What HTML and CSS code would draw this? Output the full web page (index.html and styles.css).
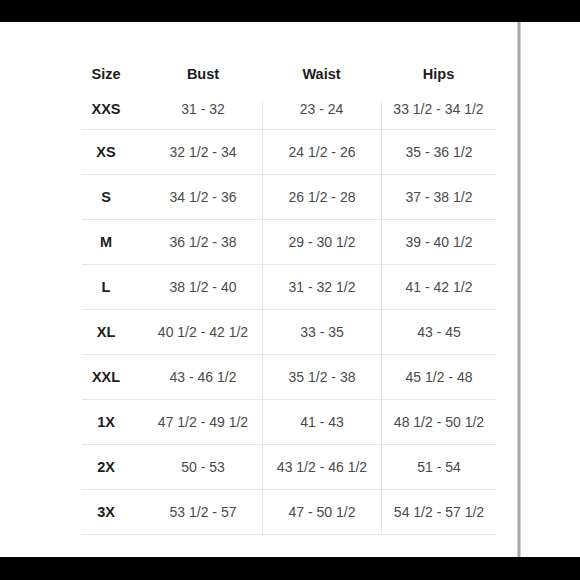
FILE: index.html
```
<!DOCTYPE html>
<html>
<head>
<meta charset="utf-8">
<link rel="stylesheet" href="styles.css">
</head>
<body>
<div class="bar-top"></div>
<div class="main">
  <div class="content">
    <div class="chart">
      <div class="row head">
        <div class="c c1">Size</div><div class="c">Bust</div><div class="c">Waist</div><div class="c">Hips</div>
      </div>
      <div class="row data first">
        <div class="c c1">XXS</div><div class="c">31 - 32</div><div class="c div">23 - 24</div><div class="c div">33 1/2 - 34 1/2</div>
      </div>
      <div class="row data">
        <div class="c c1">XS</div><div class="c">32 1/2 - 34</div><div class="c div">24 1/2 - 26</div><div class="c div">35 - 36 1/2</div>
      </div>
      <div class="row data">
        <div class="c c1">S</div><div class="c">34 1/2 - 36</div><div class="c div">26 1/2 - 28</div><div class="c div">37 - 38 1/2</div>
      </div>
      <div class="row data">
        <div class="c c1">M</div><div class="c">36 1/2 - 38</div><div class="c div">29 - 30 1/2</div><div class="c div">39 - 40 1/2</div>
      </div>
      <div class="row data">
        <div class="c c1">L</div><div class="c">38 1/2 - 40</div><div class="c div">31 - 32 1/2</div><div class="c div">41 - 42 1/2</div>
      </div>
      <div class="row data">
        <div class="c c1">XL</div><div class="c">40 1/2 - 42 1/2</div><div class="c div">33 - 35</div><div class="c div">43 - 45</div>
      </div>
      <div class="row data">
        <div class="c c1">XXL</div><div class="c">43 - 46 1/2</div><div class="c div">35 1/2 - 38</div><div class="c div">45 1/2 - 48</div>
      </div>
      <div class="row data">
        <div class="c c1">1X</div><div class="c">47 1/2 - 49 1/2</div><div class="c div">41 - 43</div><div class="c div">48 1/2 - 50 1/2</div>
      </div>
      <div class="row data">
        <div class="c c1">2X</div><div class="c">50 - 53</div><div class="c div">43 1/2 - 46 1/2</div><div class="c div">51 - 54</div>
      </div>
      <div class="row data">
        <div class="c c1">3X</div><div class="c">53 1/2 - 57</div><div class="c div">47 - 50 1/2</div><div class="c div">54 1/2 - 57 1/2</div>
      </div>
    </div>
  </div>
  <div class="scroll"></div>
  <div class="side"></div>
</div>
<div class="bar-bottom"></div>
</body>
</html>
```
FILE: styles.css
```
html, body {
  margin: 0;
  padding: 0;
  background: #ffffff;
}
body {
  width: 580px;
  height: 580px;
  display: flex;
  flex-direction: column;
  font-family: "Liberation Sans", Arial, sans-serif;
}
.bar-top {
  height: 22px;
  background: #000;
  flex: none;
}
.bar-bottom {
  height: 23px;
  background: #000;
  flex: none;
}
.main {
  flex: 1;
  display: flex;
}
.content {
  width: 517px;
  flex: none;
  padding-top: 37px;
  box-sizing: border-box;
}
.scroll {
  width: 2px;
  flex: none;
  background: #a9a9a9;
  border-left: 1px solid #d2d2d2;
  border-right: 1px solid #d2d2d2;
  margin-left: 0;
}
.side {
  flex: 1;
}
.chart {
  margin-left: 82px;
  width: 414px;
}
.row {
  display: grid;
  grid-template-columns: 62px 118px 119px 115px;
}
.c {
  display: flex;
  align-items: center;
  justify-content: center;
  white-space: nowrap;
}
.head {
  height: 30px;
}
.head .c {
  font-size: 14.5px;
  font-weight: bold;
  color: #1c1c1c;
}
.c1 {
  padding-right: 14px;
  font-size: 14.5px;
  font-weight: bold;
  color: #1c1c1c;
}
.data {
  height: 44px;
  border-bottom: 1px solid #e6e6e6;
}
.data.first {
  height: 40px;
}
.data .c {
  font-size: 14px;
  color: #4a4a4a;
}
.data .c.c1 {
  font-size: 14.5px;
  color: #1c1c1c;
}
.data .div {
  border-left: 1px solid #e6e6e6;
}
.data.first .div {
  border-left: none;
  background: linear-gradient(#e6e6e6, #e6e6e6) left bottom / 1px 27px no-repeat;
}
```
